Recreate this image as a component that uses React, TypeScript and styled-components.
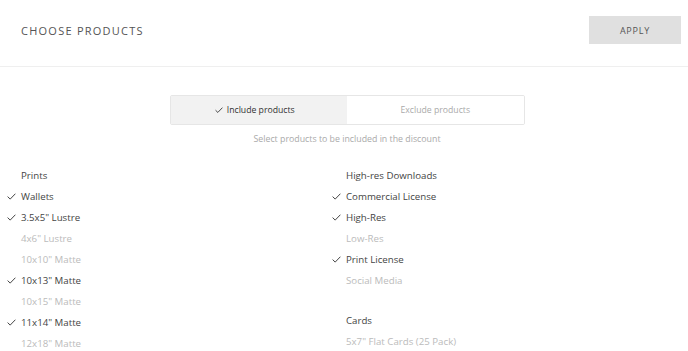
import React from 'react';
import styled, { createGlobalStyle } from 'styled-components';

const GlobalStyle = createGlobalStyle`
    body{
        margin:0;
        background:#ffffff;
        font-family:"Open Sans", "Noto Sans", sans-serif;
    }
`

type Item = { name: string; on: boolean };

const prints: Item[] = [
    { name: 'Wallets', on: true },
    { name: '3.5x5" Lustre', on: true },
    { name: '4x6" Lustre', on: false },
    { name: '10x10" Matte', on: false },
    { name: '10x13" Matte', on: true },
    { name: '10x15" Matte', on: false },
    { name: '11x14" Matte', on: true },
    { name: '12x18" Matte', on: false },
];

const downloads: Item[] = [
    { name: 'Commercial License', on: true },
    { name: 'High-Res', on: true },
    { name: 'Low-Res', on: false },
    { name: 'Print License', on: true },
    { name: 'Social Media', on: false },
];

const cards: Item[] = [
    { name: '5x7" Flat Cards (25 Pack)', on: false },
];

function Check({ size = 9 }: { size?: number }) {
    return (
        <svg width={size} height={size * 0.78} viewBox="0 0 9 7" fill="none">
            <path d="M0.6 3.6 L3.2 6.1 L8.4 0.7" stroke="currentColor" strokeWidth="1" />
        </svg>
    );
}

function Group({ title, items }: { title: string; items: Item[] }) {
    return (
        <GroupBox>
            <Row><Label>{title}</Label></Row>
            {items.map((item, index) => (
                <Row key={index} active={item.on}>
                    <Tick>{item.on ? <Check /> : null}</Tick>
                    <Label>{item.name}</Label>
                </Row>
            ))}
        </GroupBox>
    );
}

export default function App() {
    return (
        <Page>
            <GlobalStyle />
            <Header>
                <Title>CHOOSE PRODUCTS</Title>
                <ApplyButton>APPLY</ApplyButton>
            </Header>
            <Body>
                <Toggle>
                    <ToggleOption selected>
                        <Check size={8} />
                        Include products
                    </ToggleOption>
                    <ToggleOption>Exclude products</ToggleOption>
                </Toggle>
                <Hint>Select products to be included in the discount</Hint>
                <Columns>
                    <Column>
                        <Group title="Prints" items={prints} />
                    </Column>
                    <Column>
                        <Group title="High-res Downloads" items={downloads} />
                        <Group title="Cards" items={cards} />
                    </Column>
                </Columns>
            </Body>
        </Page>
    );
}

const Page = styled.div`
    width:688px;
    height:351px;
    overflow:hidden;
`
const Header = styled.div`
    height:67px;
    box-sizing:border-box;
    border-bottom:1px solid #efefef;
    display:flex;
    align-items:center;
    justify-content:space-between;
    padding:0 7px 0 21px;
`
const Title = styled.div`
    font-size:11px;
    letter-spacing:1.25px;
    color:#555;
    margin-top:-6px;
`
const ApplyButton = styled.div`
    width:92px;
    height:28px;
    margin-top:-6px;
    background:#e0e0e0;
    color:#555;
    font-size:9px;
    letter-spacing:0.8px;
    display:flex;
    align-items:center;
    justify-content:center;
`
const Body = styled.div`
    display:flex;
    flex-direction:column;
    align-items:center;
    padding-top:28px;
`
const Toggle = styled.div`
    width:355px;
    height:30px;
    margin-left:6px;
    box-sizing:border-box;
    border:1px solid #e6e6e6;
    border-radius:2px;
    display:grid;
    grid-template-columns:1fr 1fr;
    overflow:hidden;
`
const ToggleOption = styled.div<{ selected?: boolean }>`
    display:flex;
    align-items:center;
    justify-content:center;
    gap:4px;
    box-sizing:border-box;
    padding-right:${p => p.selected ? '8px' : '0'};
    font-size:8.7px;
    background:${p => p.selected ? '#f2f2f2' : '#fff'};
    color:${p => p.selected ? '#333' : '#aaa'};
`
const Hint = styled.div`
    margin-top:8px;
    margin-left:6px;
    font-size:8.8px;
    color:#aaa;
`
const Columns = styled.div`
    align-self:stretch;
    display:grid;
    grid-template-columns:325px 1fr;
    margin-top:20px;
`
const Column = styled.div`
    display:flex;
    flex-direction:column;
    gap:19px;
`
const GroupBox = styled.div`
    display:flex;
    flex-direction:column;
`
const Row = styled.div<{ active?: boolean }>`
    height:21px;
    display:flex;
    align-items:center;
    font-size:9.7px;
    color:${p => p.active === false ? '#bbb' : '#444'};
`
const Tick = styled.div`
    width:21px;
    flex:none;
    display:flex;
    justify-content:center;
    padding-left:1px;
    box-sizing:border-box;
    color:#444;
`
const Label = styled.span`
    margin-left:21px;
    ${Tick} + &{
        margin-left:0;
    }
`
